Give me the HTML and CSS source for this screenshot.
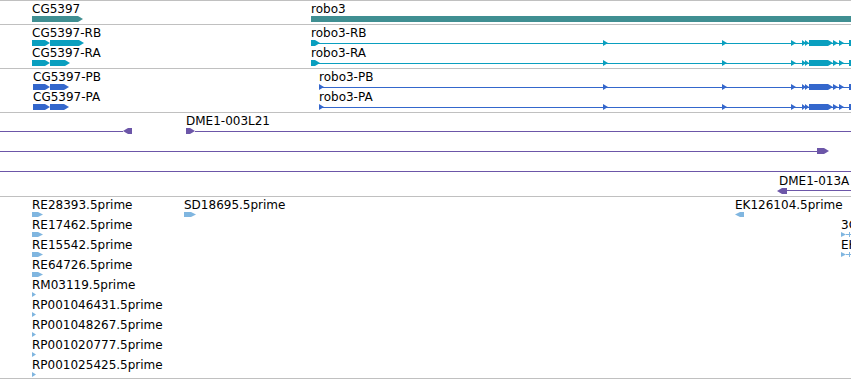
FILE: index.html
```html
<!DOCTYPE html>
<html lang="en">
<head>
    <meta charset="UTF-8">
    <title>robo3 region - tracks</title>
    <link rel="stylesheet" href="styles.css">
</head>
<body>

<div class="browser">

    <!-- Genes -->
    <div class="track track-gene">
        <span class="label" style="left:32px;top:1px">CG5397</span>
        <i class="bar fwd" style="left:32px;top:15px;width:51px"></i>
        <span class="label" style="left:311px;top:1px">robo3</span>
        <i class="bar" style="left:311px;top:15px;width:540px"></i>
    </div>

    <!-- Transcripts -->
    <div class="track track-tx c-tx">
        <span class="label" style="left:32px;top:1px">CG5397-RB</span>
        <i class="ex fwd" style="left:32px;top:15px;width:18px"></i>
        <i class="ex fwd" style="left:50px;top:15px;width:34px"></i>
        <span class="label" style="left:32px;top:21px">CG5397-RA</span>
        <i class="ex fwd" style="left:32px;top:35px;width:18px"></i>
        <i class="ex fwd" style="left:50px;top:35px;width:20px"></i>

        <span class="label" style="left:311px;top:1px">robo3-RB</span>
        <i class="line" style="left:311px;top:18px;width:540px"></i>
        <i class="ex fwd" style="left:311px;top:15px;width:9px"></i>
        <i class="ex tri" style="left:603px;top:15px"></i>
        <i class="ex tri" style="left:722px;top:15px"></i>
        <i class="ex tri" style="left:791px;top:15px"></i>
        <i class="ex tri sm" style="left:802px;top:15px"></i>
        <i class="ex tri sm" style="left:805px;top:15px"></i>
        <i class="ex fwd" style="left:809px;top:15px;width:24px"></i>
        <i class="ex tri" style="left:833px;top:15px"></i>
        <i class="ex tri" style="left:839px;top:15px"></i>
        <i class="ex" style="left:849px;top:15px;width:4px"></i>

        <span class="label" style="left:311px;top:21px">robo3-RA</span>
        <i class="line" style="left:311px;top:38px;width:540px"></i>
        <i class="ex fwd" style="left:311px;top:35px;width:9px"></i>
        <i class="ex tri" style="left:603px;top:35px"></i>
        <i class="ex tri" style="left:722px;top:35px"></i>
        <i class="ex tri" style="left:791px;top:35px"></i>
        <i class="ex tri sm" style="left:802px;top:35px"></i>
        <i class="ex tri sm" style="left:805px;top:35px"></i>
        <i class="ex fwd" style="left:809px;top:35px;width:24px"></i>
        <i class="ex tri" style="left:833px;top:35px"></i>
        <i class="ex tri" style="left:839px;top:35px"></i>
        <i class="ex" style="left:849px;top:35px;width:4px"></i>
    </div>

    <!-- Proteins -->
    <div class="track track-pep c-pep">
        <span class="label" style="left:33px;top:1px">CG5397-PB</span>
        <i class="ex fwd" style="left:33px;top:15px;width:17px"></i>
        <i class="ex fwd" style="left:50px;top:15px;width:19px"></i>
        <span class="label" style="left:33px;top:21px">CG5397-PA</span>
        <i class="ex fwd" style="left:33px;top:35px;width:17px"></i>
        <i class="ex fwd" style="left:50px;top:35px;width:19px"></i>

        <span class="label" style="left:319px;top:1px">robo3-PB</span>
        <i class="line" style="left:319px;top:18px;width:532px"></i>
        <i class="ex tri" style="left:319px;top:15px"></i>
        <i class="ex tri" style="left:603px;top:15px"></i>
        <i class="ex tri" style="left:722px;top:15px"></i>
        <i class="ex tri" style="left:791px;top:15px"></i>
        <i class="ex tri sm" style="left:802px;top:15px"></i>
        <i class="ex tri sm" style="left:805px;top:15px"></i>
        <i class="ex fwd" style="left:809px;top:15px;width:24px"></i>
        <i class="ex tri" style="left:833px;top:15px"></i>
        <i class="ex tri" style="left:839px;top:15px"></i>
        <i class="ex" style="left:849px;top:15px;width:4px"></i>

        <span class="label" style="left:319px;top:21px">robo3-PA</span>
        <i class="line" style="left:319px;top:38px;width:532px"></i>
        <i class="ex tri" style="left:319px;top:35px"></i>
        <i class="ex tri" style="left:603px;top:35px"></i>
        <i class="ex tri" style="left:722px;top:35px"></i>
        <i class="ex tri" style="left:791px;top:35px"></i>
        <i class="ex tri sm" style="left:802px;top:35px"></i>
        <i class="ex tri sm" style="left:805px;top:35px"></i>
        <i class="ex fwd" style="left:809px;top:35px;width:24px"></i>
        <i class="ex tri" style="left:833px;top:35px"></i>
        <i class="ex tri" style="left:839px;top:35px"></i>
        <i class="ex" style="left:849px;top:35px;width:4px"></i>
    </div>

    <!-- BAC ends -->
    <div class="track track-match c-match">
        <i class="line" style="left:0;top:18px;width:123px"></i>
        <i class="ex rev" style="left:123px;top:15px;width:9px"></i>
        <span class="label" style="left:186px;top:1px">DME1-003L21</span>
        <i class="ex fwd" style="left:186px;top:15px;width:9px"></i>
        <i class="line" style="left:195px;top:18px;width:656px"></i>

        <i class="line" style="left:0;top:38px;width:817px"></i>
        <i class="ex fwd" style="left:817px;top:35px;width:12px"></i>

        <i class="line" style="left:0;top:58px;width:851px"></i>

        <span class="label" style="left:779px;top:61px">DME1-013A</span>
        <i class="ex rev" style="left:777px;top:75px;width:10px"></i>
        <i class="line" style="left:787px;top:77px;width:64px"></i>
    </div>

    <!-- ESTs -->
    <div class="track track-est c-est">
        <span class="label" style="left:32px;top:1px">RE28393.5prime</span>
        <i class="ex est fwd" style="left:32px;top:15px;width:11px"></i>
        <span class="label" style="left:32px;top:21px">RE17462.5prime</span>
        <i class="ex est fwd" style="left:32px;top:35px;width:11px"></i>
        <span class="label" style="left:32px;top:41px">RE15542.5prime</span>
        <i class="ex est fwd" style="left:32px;top:55px;width:11px"></i>
        <span class="label" style="left:32px;top:61px">RE64726.5prime</span>
        <i class="ex est fwd" style="left:32px;top:75px;width:11px"></i>
        <span class="label" style="left:32px;top:81px">RM03119.5prime</span>
        <i class="ex est tri sm" style="left:32px;top:95px"></i>
        <span class="label" style="left:32px;top:101px">RP001046431.5prime</span>
        <i class="ex est tri sm" style="left:32px;top:115px"></i>
        <span class="label" style="left:32px;top:121px">RP001048267.5prime</span>
        <i class="ex est tri sm" style="left:32px;top:135px"></i>
        <span class="label" style="left:32px;top:141px">RP001020777.5prime</span>
        <i class="ex est tri sm" style="left:32px;top:155px"></i>
        <span class="label" style="left:32px;top:161px">RP001025425.5prime</span>
        <i class="ex est tri sm" style="left:32px;top:175px"></i>

        <span class="label" style="left:184px;top:1px">SD18695.5prime</span>
        <i class="ex est fwd" style="left:184px;top:15px;width:12px"></i>

        <span class="label" style="left:735px;top:1px">EK126104.5prime</span>
        <i class="ex est rev" style="left:735px;top:15px;width:9px"></i>

        <span class="label" style="left:841px;top:21px">3C02117.5prime</span>
        <i class="ex est tri" style="left:841px;top:35px"></i>
        <i class="line" style="left:846px;top:37px;width:5px"></i>
        <i class="tick" style="left:849px;top:35px"></i>

        <span class="label" style="left:841px;top:41px">EK105526.5prime</span>
        <i class="ex est tri" style="left:841px;top:55px"></i>
        <i class="line" style="left:846px;top:57px;width:5px"></i>
        <i class="tick" style="left:849px;top:55px"></i>
    </div>

</div>

</body>
</html>
```

FILE: styles.css
```css
body {
    margin: 0;
    padding: 0;
    font-family: "DejaVu Sans", Verdana, sans-serif;
    font-size: 12px;
    color: #000000;
    background-color: #ffffff;
}

.browser {
    width: 851px;
    overflow: hidden;
    border-bottom: 1px solid #c0c0c0;
}

.track {
    position: relative;
    border-top: 1px solid #c0c0c0;
    overflow: hidden;
}

.track-gene {
    height: 23px;
}

.track-tx,
.track-pep {
    height: 43px;
}

.track-match {
    height: 83px;
}

.track-est {
    height: 181px;
}

.label {
    position: absolute;
    line-height: 14px;
    white-space: nowrap;
}

.bar {
    position: absolute;
    display: block;
    height: 6px;
    background-color: #408f92;
}

.line,
.ex,
.tick {
    position: absolute;
    display: block;
    background-color: currentColor;
}

.line {
    height: 1px;
}

.ex {
    height: 6px;
}

.ex.est {
    height: 5px;
}

.tick {
    width: 1px;
    height: 5px;
}

.tri {
    width: 5px;
    clip-path: polygon(0 0, 100% 50%, 0 100%);
}

.tri.sm {
    width: 4px;
}

.fwd {
    clip-path: polygon(0 0, calc(100% - 5px) 0, 100% 50%, calc(100% - 5px) 100%, 0 100%);
}

.rev {
    clip-path: polygon(5px 0, 100% 0, 100% 100%, 5px 100%, 0 50%);
}

/* track colours */
.c-tx {
    color: #0a9fbf;
}

.c-pep {
    color: #3467cc;
}

.c-match {
    color: #6c56a8;
}

.c-est {
    color: #80b6e0;
}

.c-tx .label,
.c-pep .label,
.c-match .label,
.c-est .label {
    color: #000000;
}
```
